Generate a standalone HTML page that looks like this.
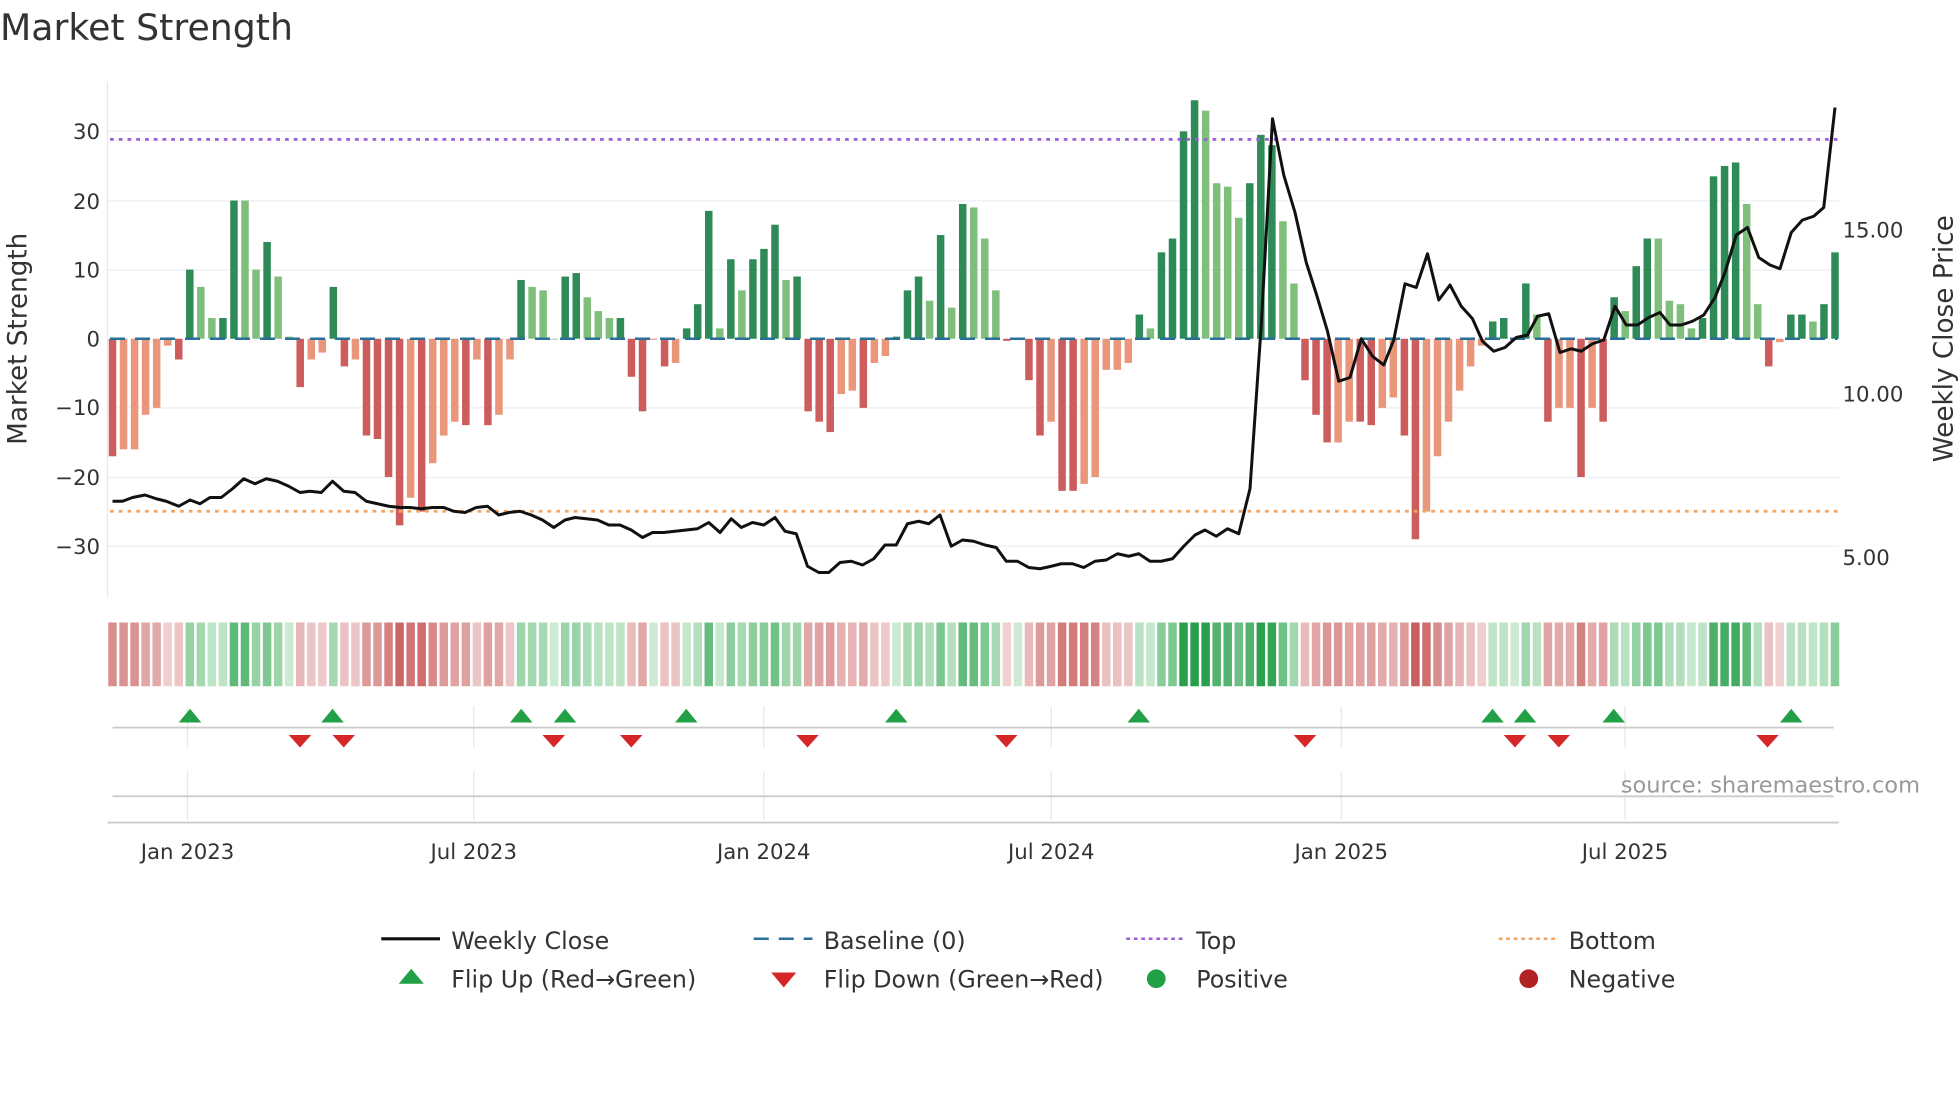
<!DOCTYPE html>
<html><head><meta charset="utf-8"><style>
html,body{margin:0;padding:0;background:#fff;}
svg{display:block;}
text{font-family:"DejaVu Sans","Liberation Sans",sans-serif;}
</style></head><body>
<svg id="s" width="1960" height="1102" viewBox="0 0 1568 881.6" xmlns="http://www.w3.org/2000/svg">
<rect width="1568" height="882" fill="#fff"/>
<text x="0" y="32" font-size="29" fill="#333">Market Strength</text>
<g stroke="#eceef3" stroke-width="1">
<line x1="86" x2="1471" y1="105" y2="105"/><line x1="86" x2="1471" y1="160.7" y2="160.7"/>
<line x1="86" x2="1471" y1="216" y2="216"/><line x1="86" x2="1471" y1="326.3" y2="326.3"/>
<line x1="86" x2="1471" y1="382" y2="382"/><line x1="86" x2="1471" y1="437" y2="437"/>
</g>
<line x1="86" x2="86" y1="65" y2="478" stroke="#e6e8ee"/>
<g font-size="17" fill="#333" text-anchor="end">
<text x="80" y="111">30</text><text x="80" y="167">20</text><text x="80" y="222">10</text>
<text x="80" y="277">0</text><text x="80" y="332">−10</text><text x="80" y="388">−20</text><text x="80" y="443">−30</text>
</g>
<g font-size="17" fill="#333">
<text x="1474" y="190">15.00</text><text x="1474" y="321">10.00</text><text x="1474" y="452">5.00</text>
</g>
<text transform="translate(21,271) rotate(-90)" font-size="21" fill="#333" text-anchor="middle">Market Strength</text>
<text transform="translate(1562,271) rotate(-90)" font-size="21" fill="#333" text-anchor="middle">Weekly Close Price</text>
<g id="bars"></g>
<line x1="88" x2="1470" y1="271" y2="271" stroke="#2a6f97" stroke-width="2" stroke-dasharray="12,8"/>
<line x1="88" x2="1470" y1="111.5" y2="111.5" stroke="#9b5fd6" stroke-width="2.2" stroke-dasharray="3,4"/>
<line x1="88" x2="1470" y1="409" y2="409" stroke="#f4a460" stroke-width="2.2" stroke-dasharray="3,4"/>
<polyline id="price" fill="none" stroke="#111" stroke-width="2.4" stroke-linejoin="round"/>
<g id="heat"></g>
<g stroke="#e4e6ea">
<line x1="150" x2="150" y1="565" y2="598"/><line x1="379" x2="379" y1="565" y2="598"/><line x1="611" x2="611" y1="565" y2="598"/><line x1="841" x2="841" y1="565" y2="598"/><line x1="1073" x2="1073" y1="565" y2="598"/><line x1="1300" x2="1300" y1="565" y2="598"/>
<line x1="150" x2="150" y1="617" y2="656"/><line x1="379" x2="379" y1="617" y2="656"/><line x1="611" x2="611" y1="617" y2="656"/><line x1="841" x2="841" y1="617" y2="656"/><line x1="1073" x2="1073" y1="617" y2="656"/><line x1="1300" x2="1300" y1="617" y2="656"/>
</g>
<line x1="90" x2="1467" y1="582" y2="582" stroke="#ccc" stroke-width="1.5"/>
<line x1="90" x2="1467" y1="637" y2="637" stroke="#ccc" stroke-width="1.5"/>
<line x1="86" x2="1471" y1="658" y2="658" stroke="#ccc" stroke-width="1.5"/>
<g id="marks"></g>
<text x="1536" y="634" font-size="18" fill="#999" text-anchor="end">source: sharemaestro.com</text>
<g font-size="17" fill="#333" text-anchor="middle">
<text x="150" y="687">Jan 2023</text><text x="379" y="687">Jul 2023</text><text x="611" y="687">Jan 2024</text>
<text x="841" y="687">Jul 2024</text><text x="1073" y="687">Jan 2025</text><text x="1300" y="687">Jul 2025</text>
</g>
<g font-size="19" fill="#333">
<line x1="305" x2="352" y1="751" y2="751" stroke="#111" stroke-width="2.5"/><text x="361" y="759">Weekly Close</text>
<line x1="603" x2="650" y1="751" y2="751" stroke="#2a6f97" stroke-width="2" stroke-dasharray="12,8"/><text x="659" y="759">Baseline (0)</text>
<line x1="901" x2="948" y1="751" y2="751" stroke="#9b5fd6" stroke-width="2" stroke-dasharray="3,3"/><text x="957" y="759">Top</text>
<line x1="1199" x2="1246" y1="751" y2="751" stroke="#f4a460" stroke-width="2" stroke-dasharray="3,3"/><text x="1255" y="759">Bottom</text>
<polygon points="319,787 329,775 339,787" fill="#22a045"/><text x="361" y="790">Flip Up (Red→Green)</text>
<polygon points="617,778 627,790 637,778" fill="#d62728"/><text x="659" y="790">Flip Down (Green→Red)</text>
<circle cx="925" cy="783" r="7.5" fill="#22a045"/><text x="957" y="790">Positive</text>
<circle cx="1223" cy="783" r="7.5" fill="#b22222"/><text x="1255" y="790">Negative</text>
</g>
</svg>
<script>
var NS="http://www.w3.org/2000/svg";
function el(p,t,a){var e=document.createElementNS(NS,t);for(var k in a)e.setAttribute(k,a[k]);p.appendChild(e);return e;}
var B=[[-17,'r'],[-16,'s'],[-16,'s'],[-11,'s'],[-10,'s'],[-1,'s'],[-3,'r'],[10,'d'],[7.5,'l'],[3,'l'],[3,'d'],[20,'d'],[20,'l'],[10,'l'],[14,'d'],[9,'l'],[0.3,'l'],[-7,'r'],[-3,'s'],[-2,'s'],[7.5,'d'],[-4,'r'],[-3,'s'],[-14,'r'],[-14.5,'r'],[-20,'r'],[-27,'r'],[-23,'s'],[-25,'r'],[-18,'s'],[-14,'s'],[-12,'s'],[-12.5,'r'],[-3,'s'],[-12.5,'r'],[-11,'s'],[-3,'s'],[8.5,'d'],[7.5,'l'],[7,'l'],[0,'l'],[9,'d'],[9.5,'d'],[6,'l'],[4,'l'],[3,'l'],[3,'d'],[-5.5,'r'],[-10.5,'r'],[0,'r'],[-4,'r'],[-3.5,'s'],[1.5,'d'],[5,'d'],[18.5,'d'],[1.5,'l'],[11.5,'d'],[7,'l'],[11.5,'d'],[13,'d'],[16.5,'d'],[8.5,'l'],[9,'d'],[-10.5,'r'],[-12,'r'],[-13.5,'r'],[-8,'s'],[-7.5,'s'],[-10,'r'],[-3.5,'s'],[-2.5,'s'],[0.3,'d'],[7,'d'],[9,'d'],[5.5,'l'],[15,'d'],[4.5,'l'],[19.5,'d'],[19,'l'],[14.5,'l'],[7,'l'],[-0.3,'r'],[0,'r'],[-6,'r'],[-14,'r'],[-12,'s'],[-22,'r'],[-22,'r'],[-21,'s'],[-20,'s'],[-4.5,'s'],[-4.5,'s'],[-3.5,'s'],[3.5,'d'],[1.5,'l'],[12.5,'d'],[14.5,'d'],[30,'d'],[34.5,'d'],[33,'l'],[22.5,'l'],[22,'l'],[17.5,'l'],[22.5,'d'],[29.5,'d'],[28,'d'],[17,'l'],[8,'l'],[-6,'r'],[-11,'r'],[-15,'r'],[-15,'s'],[-12,'s'],[-12,'r'],[-12.5,'r'],[-10,'s'],[-8.5,'s'],[-14,'r'],[-29,'r'],[-25,'s'],[-17,'s'],[-12,'s'],[-7.5,'s'],[-4,'s'],[-1,'s'],[2.5,'d'],[3,'d'],[0,'d'],[8,'d'],[3.5,'l'],[-12,'r'],[-10,'s'],[-10,'s'],[-20,'r'],[-10,'s'],[-12,'r'],[6,'d'],[4,'l'],[10.5,'d'],[14.5,'d'],[14.5,'l'],[5.5,'l'],[5,'l'],[1.5,'l'],[3,'d'],[23.5,'d'],[25,'d'],[25.5,'d'],[19.5,'l'],[5,'l'],[-4,'r'],[-0.5,'s'],[3.5,'d'],[3.5,'d'],[2.5,'l'],[5,'d'],[12.5,'d']];
var C={d:'#2e8b57',l:'#7fbf7b',r:'#cd5c5c',s:'#e9967a'};
var n=B.length,x0=90,x1=1468,st=(x1-x0)/(n-1);
var bg=document.getElementById('bars'),hg=document.getElementById('heat');
for(var i=0;i<n;i++){var v=B[i][0],x=x0+i*st,y=271-v*5.53;
 el(bg,'rect',{x:x-3,y:Math.min(y,271),width:6,height:Math.max(Math.abs(v*5.53),0.6),fill:C[B[i][1]]});
 var a=Math.min(1,Math.abs(v)/30),col;
 if(v>=0){var r=Math.round(205-(205-40)*a),g=Math.round(235-(235-160)*a),b=Math.round(210-(210-75)*a);col='rgb('+r+','+g+','+b+')';}
 else{var r=Math.round(240-(240-200)*a),g=Math.round(210-(210-90)*a),b=Math.round(210-(210-90)*a);col='rgb('+r+','+g+','+b+')';}
 el(hg,'rect',{x:x-3.4,y:498,width:6.8,height:51,fill:col});}
var P=[[90,401],[98,401],[106,398],[116,396],[125,399],[133,401],[143,405],[152,400],[160,403],[168,398],[177,398],[186,391],[195,383],[204,387],[213,383],[222,385],[231,389],[240,394],[248,393],[257,394],[266,385],[275,393],[284,394],[293,401],[302,403],[311,405],[320,406],[328,406],[337,407],[346,406],[355,406],[363,409],[372,410],[381,406],[390,405],[399,412],[407,410],[416,409],[425,412],[434,416],[443,422],[452,416],[460,414],[469,415],[478,416],[487,420],[496,420],[505,424],[514,430],[522,426],[531,426],[540,425],[549,424],[558,423],[567,418],[576,426],[585,415],[593,422],[602,418],[611,420],[620,414],[628,425],[637,427],[646,453],[655,458],[663,458],[672,450],[681,449],[690,452],[699,447],[708,436],[717,436],[726,419],[735,417],[743,419],[752,412],[761,437],[770,432],[779,433],[788,436],[797,438],[805,449],[814,449],[823,454],[832,455],[841,453],[849,451],[858,451],[867,454],[876,449],[885,448],[894,443],[903,445],[911,443],[920,449],[929,449],[938,447],[947,437],[956,428],[964,424],[973,429],[982,423],[991,427],[1000,391],[1009,260],[1018,95],[1027,140],[1036,170],[1045,210],[1053,235],[1062,265],[1071,305],[1080,302],[1089,271],[1098,285],[1107,292],[1115,272],[1124,227],[1133,230],[1142,203],[1151,240],[1160,228],[1169,245],[1178,255],[1186,273],[1195,281],[1204,278],[1213,270],[1222,268],[1230,253],[1239,251],[1248,282],[1257,279],[1265,281],[1274,275],[1283,272],[1292,245],[1301,260],[1310,260],[1319,254],[1328,250],[1336,260],[1345,260],[1354,257],[1363,252],[1372,238],[1380,218],[1389,188],[1398,182],[1407,206],[1416,212],[1424,215],[1433,186],[1442,176],[1451,173],[1459,166],[1468,86]];
document.getElementById('price').setAttribute('points',P.map(function(p){return p.join(',')}).join(' '));
var mg=document.getElementById('marks');
[152,266,417,452,549,717,911,1194,1220,1291,1433].forEach(function(x){el(mg,'polygon',{points:(x-9)+',578 '+x+',567 '+(x+9)+',578',fill:'#22a045'});});
[240,275,443,505,646,805,1044,1212,1247,1414].forEach(function(x){el(mg,'polygon',{points:(x-9)+',588 '+x+',598 '+(x+9)+',588',fill:'#d62728'});});
</script>
</body></html>
